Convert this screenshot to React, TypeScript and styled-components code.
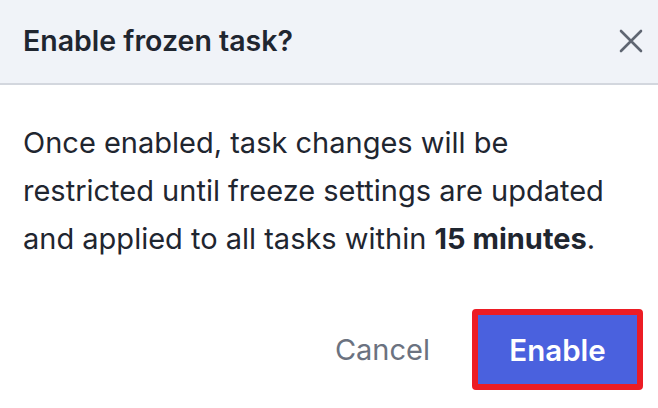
import React from 'react';
import styled, { createGlobalStyle } from 'styled-components';

const GlobalStyle = createGlobalStyle`
  html, body {
    margin: 0;
    padding: 0;
    background: #ffffff;
  }
  body {
    font-family: Inter, "Noto Sans", "Liberation Sans", sans-serif;
  }
`;

const Dialog = styled.div`
  width: 658px;
  height: 408px;
  display: flex;
  flex-direction: column;
  background: #ffffff;
`;

const Header = styled.div`
  height: 85px;
  box-sizing: border-box;
  display: flex;
  align-items: center;
  justify-content: space-between;
  padding: 0 12px 2px 23px;
  background: #f0f3f8;
  border-bottom: 2px solid #d3d7de;
`;

const Title = styled.h2`
  margin: 0;
  font-size: 28.5px;
  font-weight: 600;
  color: #1f2630;
`;

const CloseButton = styled.button`
  width: 30px;
  height: 30px;
  padding: 0;
  border: none;
  background: transparent;
  display: flex;
  align-items: center;
  justify-content: center;
  color: #5f6672;
  cursor: pointer;
`;

const Body = styled.div`
  padding: 34px 23px 0;
`;

const Message = styled.p`
  margin: 0;
  font-size: 29px;
  line-height: 48px;
  color: #1f2630;

  strong {
    font-weight: 700;
  }
`;

const Footer = styled.div`
  display: flex;
  justify-content: flex-end;
  align-items: center;
  gap: 42px;
  padding: 46px 15px 0;
`;

const TextButton = styled.button`
  border: none;
  background: transparent;
  padding: 0;
  font-family: inherit;
  font-size: 29px;
  color: #6b7280;
  cursor: pointer;
`;

const PrimaryButton = styled.button<{ $highlighted?: boolean }>`
  width: 171px;
  height: 81px;
  box-sizing: border-box;
  border: ${(p) => (p.$highlighted ? '6px solid #ec1c24' : 'none')};
  border-radius: 4px;
  background: #4a61de;
  color: #ffffff;
  font-family: inherit;
  font-size: 29.5px;
  font-weight: 600;
  cursor: pointer;
`;

const CloseIcon = () => (
  <svg width="24" height="24" viewBox="0 0 24 24" fill="none">
    <path
      d="M2 2L22 22M22 2L2 22"
      stroke="currentColor"
      strokeWidth="2.6"
      strokeLinecap="round"
    />
  </svg>
);

export default function App() {
  return (
    <>
      <GlobalStyle />
      <Dialog>
        <Header>
          <Title>Enable frozen task?</Title>
          <CloseButton aria-label="Close">
            <CloseIcon />
          </CloseButton>
        </Header>
        <Body>
          <Message>
            Once enabled, task changes will be
            <br />
            restricted until freeze settings are updated
            <br />
            and applied to all tasks within <strong>15 minutes</strong>.
          </Message>
        </Body>
        <Footer>
          <TextButton>Cancel</TextButton>
          <PrimaryButton $highlighted>Enable</PrimaryButton>
        </Footer>
      </Dialog>
    </>
  );
}
